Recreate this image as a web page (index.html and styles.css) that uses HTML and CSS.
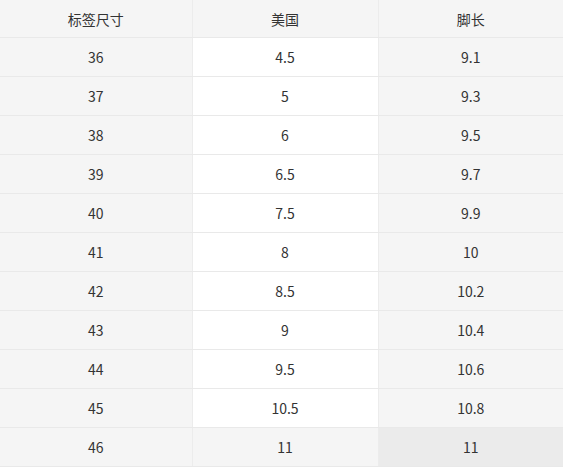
FILE: index.html
```html
<!DOCTYPE html>
<html lang="zh">
<head>
<meta charset="utf-8">
<link rel="stylesheet" href="styles.css">
</head>
<body>
<table class="size-table">
  <colgroup><col class="c1"><col class="c2"><col class="c3"></colgroup>
  <thead>
    <tr><th>标签尺寸</th><th>美国</th><th>脚长</th></tr>
  </thead>
  <tbody>
    <tr><td>36</td><td>4.5</td><td>9.1</td></tr>
    <tr><td>37</td><td>5</td><td>9.3</td></tr>
    <tr><td>38</td><td>6</td><td>9.5</td></tr>
    <tr><td>39</td><td>6.5</td><td>9.7</td></tr>
    <tr><td>40</td><td>7.5</td><td>9.9</td></tr>
    <tr><td>41</td><td>8</td><td>10</td></tr>
    <tr><td>42</td><td>8.5</td><td>10.2</td></tr>
    <tr><td>43</td><td>9</td><td>10.4</td></tr>
    <tr><td>44</td><td>9.5</td><td>10.6</td></tr>
    <tr><td>45</td><td>10.5</td><td>10.8</td></tr>
    <tr class="active"><td>46</td><td>11</td><td class="hover">11</td></tr>
  </tbody>
</table>
</body>
</html>
```
FILE: styles.css
```css
html, body {
  margin: 0;
  padding: 0;
  background: #fff;
}
.size-table {
  width: 563px;
  border-collapse: collapse;
  table-layout: fixed;
  font-family: "Noto Sans CJK SC", "Microsoft YaHei", sans-serif;
  font-size: 14px;
  color: #333;
}
.c1 { width: 192px; }
.c2 { width: 186px; }
.c3 { width: 185px; }
.size-table th,
.size-table td {
  text-align: center;
  padding: 0;
  border-bottom: 1px solid #e9e9e9;
  border-left: 1px solid #ececec;
  font-weight: normal;
  line-height: 20px;
}
.size-table th:first-child,
.size-table td:first-child { border-left: none; }
.size-table th {
  height: 37px;
  background: #f5f5f5;
}
.size-table td {
  height: 38px;
  background: #f5f5f5;
}
.size-table td:nth-child(2) { background: #fff; }
.size-table tr.active td:nth-child(2) { background: #f5f5f5; }
.size-table tr.active td.hover { background: #ebebeb; }
```
